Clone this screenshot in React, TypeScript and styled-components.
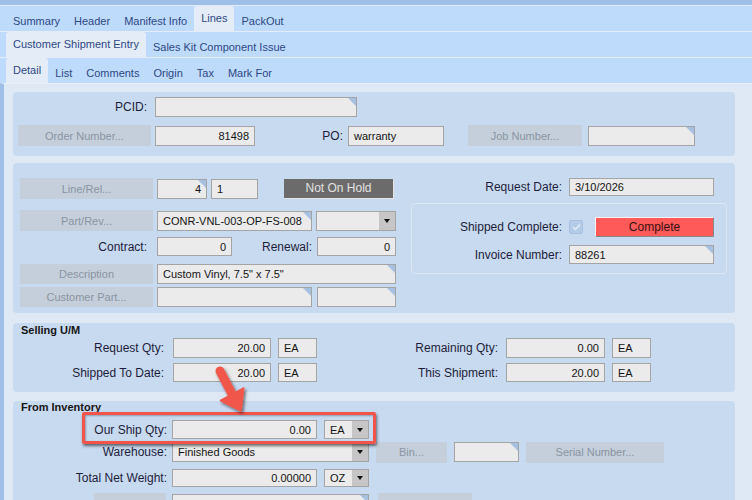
import React from 'react';
import styled, { createGlobalStyle, css } from 'styled-components';

const Global = createGlobalStyle`
  html, body { margin: 0; padding: 0; }
  body { background: #dfe9f5; font-family: "Liberation Sans", Arial, sans-serif; overflow: hidden; }
  * { box-sizing: border-box; }
`;

const Page = styled.div`
  position: relative;
  width: 752px;
  height: 500px;
  overflow: hidden;
  display: flex;
  flex-direction: column;
  background: #dfe9f5;
`;

const TitleStrip = styled.div`
  height: 5px;
  flex: none;
  background: #9dbfe8;
`;

const TabStrip = styled.div`
  display: flex;
  height: 26px;
  flex: none;
  border-top: 1px solid #e3ecf7;
  background: #bedbfc;
  padding-left: 6px;
`;

const Tab = styled.div<{ $sel?: boolean }>`
  display: flex;
  align-items: center;
  padding: ${(p) => (p.$sel ? '0 7px 1px' : '4px 7px 0')};
  font-size: 11px;
  color: #2e4785;
  background: ${(p) => (p.$sel ? '#e4edf7' : 'transparent')};
  border-radius: 3px 3px 0 0;
  white-space: nowrap;
`;

const Content = styled.div`
  flex: 1;
  display: flex;
  flex-direction: column;
  border-top: 1px solid #e8eff8;
  border-left: 4px solid #9dbfe8;
  padding: 8px 17px 0 9px;
`;

const Panel = styled.div<{ $mt?: number; $pad: string }>`
  position: relative;
  flex: none;
  background: #c8daf0;
  border-radius: 4px;
  margin-top: ${(p) => p.$mt ?? 0}px;
  padding: ${(p) => p.$pad};
`;

const SectionTitle = styled.div`
  font-size: 11px;
  font-weight: bold;
  line-height: 13px;
  color: #161616;
`;

const Row = styled.div<{ $mt?: number; $h: number }>`
  display: flex;
  align-items: center;
  height: ${(p) => p.$h}px;
  margin-top: ${(p) => p.$mt ?? 0}px;
`;

const Split = styled.div`
  display: flex;
  align-items: flex-start;
`;

const Col = styled.div<{ $ml?: number; $w?: number }>`
  display: flex;
  flex-direction: column;
  margin-left: ${(p) => p.$ml ?? 0}px;
  ${(p) => (p.$w ? `width: ${p.$w}px;` : '')}
`;

const Label = styled.div<{ $w: number; $ml?: number }>`
  flex: none;
  width: ${(p) => p.$w}px;
  margin-left: ${(p) => p.$ml ?? 0}px;
  text-align: right;
  font-size: 12px;
  color: #1d1d3a;
  white-space: nowrap;
`;

const Field = styled.div<{ $w: number; $h?: number; $ml?: number; $right?: boolean; $corner?: boolean }>`
  position: relative;
  flex: none;
  width: ${(p) => p.$w}px;
  height: ${(p) => p.$h ?? 20}px;
  margin-left: ${(p) => p.$ml ?? 0}px;
  background: #ebebeb;
  border: 1px solid #a4a4a4;
  font-size: 11px;
  color: #141414;
  display: flex;
  align-items: center;
  justify-content: ${(p) => (p.$right ? 'flex-end' : 'flex-start')};
  padding: 0 5px;
  overflow: hidden;
  white-space: nowrap;
  ${(p) =>
    p.$corner &&
    css`
      &::after {
        content: '';
        position: absolute;
        top: 0;
        right: 0;
        border-top: 8px solid #a6c0e2;
        border-left: 8px solid transparent;
      }
    `}
`;

const Btn = styled.div<{ $w: number; $h?: number; $ml?: number }>`
  flex: none;
  width: ${(p) => p.$w}px;
  height: ${(p) => p.$h ?? 21}px;
  margin-left: ${(p) => p.$ml ?? 0}px;
  background: #c5cfdb;
  color: #8994a2;
  font-size: 11px;
  display: flex;
  align-items: center;
  justify-content: center;
  white-space: nowrap;
  overflow: hidden;
`;

const Combo = styled.div<{ $w: number; $h?: number; $ml?: number }>`
  flex: none;
  display: flex;
  width: ${(p) => p.$w}px;
  height: ${(p) => p.$h ?? 20}px;
  margin-left: ${(p) => p.$ml ?? 0}px;
  border: 1px solid #a4a4a4;
  background: #ebebeb;
  font-size: 11px;
`;

const ComboText = styled.div`
  flex: 1;
  display: flex;
  align-items: center;
  padding: 0 5px;
  color: #141414;
  white-space: nowrap;
  overflow: hidden;
`;

const ComboDrop = styled.div`
  flex: none;
  width: 16px;
  background: #c6c6c6;
  display: flex;
  align-items: center;
  justify-content: center;
  &::before {
    content: '';
    border-top: 4px solid #111;
    border-left: 3px solid transparent;
    border-right: 3px solid transparent;
  }
`;

const HoldBox = styled.div<{ $ml: number }>`
  flex: none;
  width: 110px;
  height: 20px;
  margin-left: ${(p) => p.$ml}px;
  background: #6b6b6b;
  border-right: 1px solid #e4e4e4;
  border-bottom: 1px solid #e4e4e4;
  color: #e2e2e2;
  font-size: 12px;
  display: flex;
  align-items: center;
  justify-content: center;
`;

const GroupBox = styled.div`
  margin-top: 7px;
  border: 1px solid #dce7f5;
  border-radius: 4px;
  padding: 13px 0 9px 0;
`;

const Check = styled.div<{ $ml: number }>`
  flex: none;
  width: 14px;
  height: 14px;
  margin-left: ${(p) => p.$ml}px;
  background: #b3cbe6;
  border: 1px solid #a9c1df;
  border-radius: 2px;
  display: flex;
  align-items: center;
  justify-content: center;
`;

const CompleteBtn = styled.div<{ $ml: number }>`
  flex: none;
  width: 119px;
  height: 20px;
  margin-left: ${(p) => p.$ml}px;
  background: #ff5a5a;
  border-top: 1px solid #f4f4f4;
  border-left: 1px solid #f4f4f4;
  border-right: 1px solid #8a8a8a;
  border-bottom: 1px solid #8a8a8a;
  color: #3a0f0f;
  font-size: 12px;
  display: flex;
  align-items: center;
  justify-content: center;
`;

const Highlight = styled.div`
  position: absolute;
  left: 82px;
  top: 412px;
  width: 294px;
  height: 32px;
  border: 3px solid #f0544a;
  border-radius: 2px;
  box-shadow: 1px 2px 3px rgba(0, 0, 0, 0.55), inset 1px 1px 2px rgba(0, 0, 0, 0.3);
  pointer-events: none;
`;

const ArrowSvg = styled.svg`
  position: absolute;
  left: 200px;
  top: 355px;
  overflow: visible;
  pointer-events: none;
`;

const tabs1 = ['Summary', 'Header', 'Manifest Info', 'Lines', 'PackOut'];
const tabs2 = ['Customer Shipment Entry', 'Sales Kit Component Issue'];
const tabs3 = ['Detail', 'List', 'Comments', 'Origin', 'Tax', 'Mark For'];

export default function App() {
  return (
    <Page>
      <Global />
      <TitleStrip />
      <TabStrip>
        {tabs1.map((t) => (
          <Tab key={t} $sel={t === 'Lines'}>{t}</Tab>
        ))}
      </TabStrip>
      <TabStrip>
        {tabs2.map((t, i) => (
          <Tab key={t} $sel={i === 0}>{t}</Tab>
        ))}
      </TabStrip>
      <TabStrip>
        {tabs3.map((t, i) => (
          <Tab key={t} $sel={i === 0}>{t}</Tab>
        ))}
      </TabStrip>

      <Content>
        <Panel $pad="5px 0 10px 5px">
          <Row $h={20}>
            <Label $w={129}>PCID:</Label>
            <Field $w={202} $ml={8} $corner />
          </Row>
          <Row $h={21} $mt={8}>
            <Btn $w={133}>Order Number...</Btn>
            <Field $w={100} $ml={4} $right>81498</Field>
            <Label $w={88}>PO:</Label>
            <Field $w={96} $ml={5}>warranty</Field>
            <Btn $w={114} $ml={24}>Job Number...</Btn>
            <Field $w={107} $ml={6} $corner />
          </Row>
        </Panel>

        <Panel $mt={7} $pad="15px 0 6px 7px">
          <Split>
            <Col>
              <Row $h={21}>
                <Btn $w={133}>Line/Rel...</Btn>
                <Field $w={50} $ml={4} $right $corner>4</Field>
                <Field $w={47} $ml={4}>1</Field>
                <HoldBox $ml={26}>Not On Hold</HoldBox>
              </Row>
              <Row $h={21} $mt={11}>
                <Btn $w={133}>Part/Rev...</Btn>
                <Field $w={155} $ml={4} $corner>CONR-VNL-003-OP-FS-008</Field>
                <Combo $w={80} $ml={4}>
                  <ComboText />
                  <ComboDrop />
                </Combo>
              </Row>
              <Row $h={19} $mt={6}>
                <Label $w={127}>Contract:</Label>
                <Field $w={75} $h={19} $ml={10} $right>0</Field>
                <Label $w={80}>Renewal:</Label>
                <Field $w={79} $h={19} $ml={5} $right>0</Field>
              </Row>
              <Row $h={20} $mt={8}>
                <Btn $w={133} $h={20}>Description</Btn>
                <Field $w={239} $ml={4} $corner>Custom Vinyl, 7.5" x 7.5"</Field>
              </Row>
              <Row $h={20} $mt={3}>
                <Btn $w={133} $h={20}>Customer Part...</Btn>
                <Field $w={155} $ml={4} $corner />
                <Field $w={79} $ml={5} $corner />
              </Row>
            </Col>
            <Col $ml={15} $w={316}>
              <Row $h={18}>
                <Label $w={151}>Request Date:</Label>
                <Field $w={145} $h={18} $ml={7}>3/10/2026</Field>
              </Row>
              <GroupBox>
                <Row $h={20}>
                  <Label $w={150}>Shipped Complete:</Label>
                  <Check $ml={7}>
                    <svg width="9" height="8" viewBox="0 0 9 8">
                      <path d="M1 4 L3.5 6.5 L8 1.5" fill="none" stroke="#e4eefa" strokeWidth="1.4" />
                    </svg>
                  </Check>
                  <CompleteBtn $ml={12}>Complete</CompleteBtn>
                </Row>
                <Row $h={19} $mt={8}>
                  <Label $w={150}>Invoice Number:</Label>
                  <Field $w={145} $h={19} $ml={7} $corner>88261</Field>
                </Row>
              </GroupBox>
            </Col>
          </Split>
        </Panel>

        <Panel $mt={10} $pad="1px 0 10px 8px">
          <SectionTitle>Selling U/M</SectionTitle>
          <Row $h={20} $mt={1}>
            <Label $w={143}>Request Qty:</Label>
            <Field $w={98} $ml={9} $right>20.00</Field>
            <Field $w={39} $ml={7}>EA</Field>
            <Label $w={181}>Remaining Qty:</Label>
            <Field $w={99} $ml={8} $right>0.00</Field>
            <Field $w={39} $ml={7}>EA</Field>
          </Row>
          <Row $h={19} $mt={5}>
            <Label $w={143}>Shipped To Date:</Label>
            <Field $w={98} $h={19} $ml={9} $right>20.00</Field>
            <Field $w={39} $h={19} $ml={7}>EA</Field>
            <Label $w={181}>This Shipment:</Label>
            <Field $w={99} $h={19} $ml={8} $right>20.00</Field>
            <Field $w={39} $h={19} $ml={7}>EA</Field>
          </Row>
        </Panel>

        <Panel $mt={9} $pad="0 0 20px 8px">
          <SectionTitle>From Inventory</SectionTitle>
          <Row $h={19} $mt={6}>
            <Label $w={146}>Our Ship Qty:</Label>
            <Field $w={145} $h={19} $ml={5} $right>0.00</Field>
            <Combo $w={45} $h={19} $ml={7}>
              <ComboText>EA</ComboText>
              <ComboDrop />
            </Combo>
          </Row>
          <Row $h={22} $mt={2}>
            <Label $w={146}>Warehouse:</Label>
            <Combo $w={197} $h={19} $ml={5}>
              <ComboText>Finished Goods</ComboText>
              <ComboDrop />
            </Combo>
            <Btn $w={71} $ml={7}>Bin...</Btn>
            <Field $w={65} $ml={7} $corner />
            <Btn $w={138} $ml={7}>Serial Number...</Btn>
          </Row>
          <Row $h={18} $mt={6}>
            <Label $w={146}>Total Net Weight:</Label>
            <Field $w={145} $h={18} $ml={5} $right>0.00000</Field>
            <Combo $w={45} $h={18} $ml={7}>
              <ComboText>OZ</ComboText>
              <ComboDrop />
            </Combo>
          </Row>
          <Row $h={21} $mt={6}>
            <Btn $w={72} $ml={73} />
            <Field $w={197} $ml={6} $corner />
            <Btn $w={94} $ml={9} />
          </Row>
        </Panel>
      </Content>

      <Highlight />
      <ArrowSvg width="70" height="65" viewBox="200 355 70 65">
        <defs>
          <filter id="sh" x="-30%" y="-30%" width="160%" height="160%">
            <feDropShadow dx="1.5" dy="2" stdDeviation="1.5" floodColor="#000" floodOpacity="0.55" />
          </filter>
        </defs>
        <g filter="url(#sh)" fill="#f0574a" stroke="#f0574a">
          <line x1="220" y1="371" x2="232" y2="394" strokeWidth="9" strokeLinecap="round" />
          <polygon points="220.5,400.5 243.8,388 241,411" strokeWidth="1.5" strokeLinejoin="round" />
        </g>
      </ArrowSvg>
    </Page>
  );
}
